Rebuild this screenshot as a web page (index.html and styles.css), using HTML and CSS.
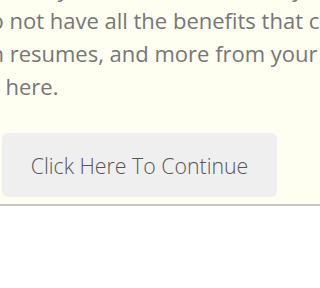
FILE: index.html
```html
<!DOCTYPE html>
<html>
<head>
<meta charset="utf-8">
<link rel="stylesheet" href="styles.css">
</head>
<body>
<div class="panel">
  <div class="msg">
    <div class="line l0">Since you are not a member you</div>
    <div class="line l1">do not have all the benefits that come with</div>
    <div class="line l2">with resumes, and more from your account</div>
    <div class="line l3">click here.</div>
  </div>
  <div class="actions">
    <button class="btn">Click Here To Continue</button>
  </div>
</div>
</body>
</html>
```
FILE: styles.css
```css
html, body {
  margin: 0;
  padding: 0;
  background: #ffffff;
  overflow: hidden;
}
.panel {
  background: #fefef1;
  border-bottom: 2px solid #c9c9c4;
  overflow: hidden;
  height: 204px;
  display: flex;
  flex-direction: column;
}
.msg {
  margin-top: -28px;
  font-family: "Open Sans", sans-serif;
  font-size: 22px;
  line-height: 33px;
  color: #777777;
}
.line {
  white-space: nowrap;
}
.l0 { margin-left: -2px; margin-bottom: -1px; }
.l1 { margin-left: -23px; }
.l2 { margin-left: -40px; }
.l3 { margin-left: -44px; }
.actions {
  padding: 0 0 0 2px;
  margin-top: 30px;
}
.btn {
  display: block;
  width: 275px;
  height: 64px;
  border: none;
  border-radius: 6px;
  background: #efefef;
  font-family: "Open Sans", sans-serif;
  font-weight: 300;
  font-size: 21.3px;
  color: #555555;
  padding: 0;
}
```
